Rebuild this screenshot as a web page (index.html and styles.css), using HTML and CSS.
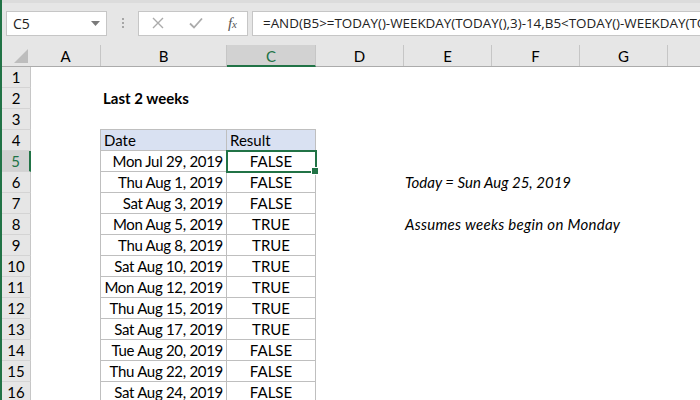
FILE: index.html
```html
<!DOCTYPE html>
<html>
<head>
<meta charset="utf-8" />
<title>Last 2 weeks</title>
<link rel="stylesheet" href="styles.css">
</head>
<body>
<div class="app">
	<!-- formula bar -->
	<div class="fbar">
		<div class="namebox">
			<span>C5</span>
			<svg class="drop" width="9" height="5" viewBox="0 0 9 5"><path d="M0 0H9L4.5 5Z" fill="#7a7a7a"/></svg>
		</div>
		<div class="dots"><i></i><i></i><i></i></div>
		<div class="fxbox">
			<svg width="12" height="12" viewBox="0 0 12 12"><path d="M1 1L11 11M11 1L1 11" stroke="#ababab" stroke-width="1.4" fill="none"/></svg>
			<svg width="14" height="12" viewBox="0 0 14 12"><path d="M1 6.5L5 10.5L13 1.5" stroke="#ababab" stroke-width="1.8" fill="none"/></svg>
			<span class="fx">f<small>x</small></span>
		</div>
		<div class="formula">=AND(B5&gt;=TODAY()-WEEKDAY(TODAY(),3)-14,B5&lt;TODAY()-WEEKDAY(TODAY(),3)+1)</div>
	</div>

	<!-- sheet -->
	<div class="sheet">
		<div class="colhead">
			<div class="corner"><svg width="14" height="14" viewBox="0 0 14 14"><path d="M14 0V14H0Z" fill="#bdbdbd"/></svg></div>
			<div class="ch wa">A</div>
			<div class="ch wb">B</div>
			<div class="ch wc on">C</div>
			<div class="ch wd">D</div>
			<div class="ch wd">E</div>
			<div class="ch wd">F</div>
			<div class="ch wd">G</div>
			<div class="ch wh"></div>
		</div>

		<div class="row"><div class="rh">1</div></div>
		<div class="row"><div class="rh">2</div><div class="c wa2"></div><div class="c title">Last 2 weeks</div></div>
		<div class="row"><div class="rh">3</div></div>
		<div class="row">
			<div class="rh">4</div><div class="c wa2"></div>
			<div class="c tb head top">Date</div><div class="c tc head top">Result</div>
		</div>
		<div class="row">
			<div class="rh on">5</div><div class="c wa2"></div>
			<div class="c tb">Mon Jul 29, 2019</div><div class="c tc sel">FALSE</div>
		</div>
		<div class="row">
			<div class="rh">6</div><div class="c wa2"></div>
			<div class="c tb">Thu Aug 1, 2019</div><div class="c tc">FALSE</div>
			<div class="c wd"></div><div class="c note">Today = Sun Aug 25, 2019</div>
		</div>
		<div class="row">
			<div class="rh">7</div><div class="c wa2"></div>
			<div class="c tb">Sat Aug 3, 2019</div><div class="c tc">FALSE</div>
		</div>
		<div class="row">
			<div class="rh">8</div><div class="c wa2"></div>
			<div class="c tb">Mon Aug 5, 2019</div><div class="c tc">TRUE</div>
			<div class="c wd"></div><div class="c note wide">Assumes weeks begin on Monday</div>
		</div>
		<div class="row">
			<div class="rh">9</div><div class="c wa2"></div>
			<div class="c tb">Thu Aug 8, 2019</div><div class="c tc">TRUE</div>
		</div>
		<div class="row">
			<div class="rh">10</div><div class="c wa2"></div>
			<div class="c tb">Sat Aug 10, 2019</div><div class="c tc">TRUE</div>
		</div>
		<div class="row">
			<div class="rh">11</div><div class="c wa2"></div>
			<div class="c tb">Mon Aug 12, 2019</div><div class="c tc">TRUE</div>
		</div>
		<div class="row">
			<div class="rh">12</div><div class="c wa2"></div>
			<div class="c tb">Thu Aug 15, 2019</div><div class="c tc">TRUE</div>
		</div>
		<div class="row">
			<div class="rh">13</div><div class="c wa2"></div>
			<div class="c tb">Sat Aug 17, 2019</div><div class="c tc">TRUE</div>
		</div>
		<div class="row">
			<div class="rh">14</div><div class="c wa2"></div>
			<div class="c tb">Tue Aug 20, 2019</div><div class="c tc">FALSE</div>
		</div>
		<div class="row">
			<div class="rh">15</div><div class="c wa2"></div>
			<div class="c tb">Thu Aug 22, 2019</div><div class="c tc">FALSE</div>
		</div>
		<div class="row">
			<div class="rh">16</div><div class="c wa2"></div>
			<div class="c tb">Sat Aug 24, 2019</div><div class="c tc">FALSE</div>
		</div>
	</div>
</div>
</body>
</html>
```

FILE: styles.css
```css
*{ margin:0; padding:0; box-sizing:border-box;}
body{ width:700px; height:400px; overflow:hidden; background:#fff; font-family:"Lato", "Liberation Sans", sans-serif; color:#000;}

.app{ border-left:2px solid #217346; height:400px; overflow:hidden;}

/* formula bar */
.fbar{ height:45px; background:#e6e6e6; border-top:3px solid #dcdcdc; display:flex; align-items:center; padding:0 0 2px 4px; white-space:nowrap;}
.namebox{ width:101px; height:25px; background:#fff; border:1px solid #c6c6c6; display:flex; align-items:center; justify-content:space-between; padding:0 6px 0 6px; font:14px "Open Sans", sans-serif; color:#222;}
.dots{ width:31px; display:flex; flex-direction:column; align-items:center; gap:2px;}
.dots i{ display:block; width:2px; height:2px; background:#a6a6a6;}
.fxbox{ width:110px; height:25px; background:#fff; border:1px solid #c6c6c6; display:flex; align-items:center; justify-content:space-between; padding:0 10px 0 13px;}
.fx{ font:italic 15px "Liberation Serif", serif; color:#555;}
.fx small{ font-size:11px;}
.formula{ flex:1; margin-left:4px; height:25px; background:#fff; border:1px solid #c6c6c6; border-right:0; padding:0 0 0 10px; font:13.4px "Open Sans", sans-serif; line-height:23px; color:#222; overflow:hidden;}

/* column header */
.colhead{ display:flex; height:22px; background:#e6e6e6; border-bottom:1px solid #ababab;}
.corner{ width:29px; display:flex; align-items:flex-end; justify-content:flex-end; padding:0 3px 3px 0;}
.ch{ height:21px; border-right:1px solid #c6c6c6; text-align:center; font-size:15px; line-height:22px;}
.ch.on{ background:#d2d2d2; color:#217346; border-bottom:2px solid #217346; height:22px;}
.wa{ width:70px;}
.wb{ width:126px;}
.wc{ width:89px;}
.wd{ width:88px; flex:none;}
.wh{ flex:1; border-right:0;}

/* rows */
.row{ display:flex; height:21px; white-space:nowrap;}
.rh{ width:29px; flex:none; background:#e6e6e6; border-right:1px solid #c6c6c6; border-bottom:1px solid #d4d4d4; text-align:center; font-size:15px; line-height:21px;}
.rh.on{ background:#d2d2d2; color:#217346; border-right:2px solid #217346;}

.c{ height:21px; font-size:15px; line-height:21px; flex:none;}
.wa2{ width:69px;}
.title{ padding-left:3px; font-weight:bold; width:200px;}
.tb{ width:127px; border-left:1px solid #bfbfbf; border-right:1px solid #bfbfbf; border-bottom:1px solid #bfbfbf; text-align:right; padding-right:3px; letter-spacing:-0.3px;}
.tc{ width:89px; border-right:1px solid #bfbfbf; border-bottom:1px solid #bfbfbf; text-align:center;}
.head{ background:#d9e1f2; text-align:left; padding-left:3px; letter-spacing:0;}
.top{ box-shadow:0 -1px 0 #bfbfbf;}
.note{ padding-left:1px; font-style:italic;}
.note.wide{ letter-spacing:0.28px;}

/* active cell */
.sel{ position:relative; outline:2px solid #217346; outline-offset:-1px;}
.sel::after{ content:""; position:absolute; right:-4px; bottom:-4px; width:6px; height:6px; background:#217346; border:1px solid #fff;}
```
